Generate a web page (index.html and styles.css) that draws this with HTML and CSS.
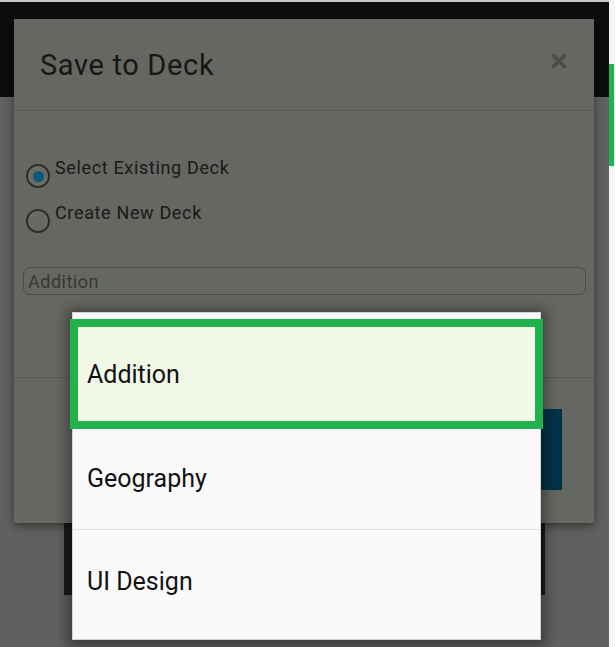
FILE: index.html
```html
<!DOCTYPE html>
<html lang="en">
<head>
<meta charset="utf-8">
<title>Save to Deck</title>
<link rel="stylesheet" href="styles.css">
</head>
<body>
<div class="page">
  <div class="screen">
    <div class="topline"></div>
    <div class="appbar"></div>
    <div class="content">
      <div class="card"></div>
    </div>

    <div class="modal">
      <div class="modal-header">
        <h1 class="modal-title">Save to Deck</h1>
        <button class="close" aria-label="Close">
          <svg width="16" height="16" viewBox="0 0 16 16"><path d="M2.5 2.5 L13.5 13.5 M13.5 2.5 L2.5 13.5" stroke="#4b4e4a" stroke-width="3.6" stroke-linecap="round" fill="none"/></svg>
        </button>
      </div>
      <div class="modal-body">
        <label class="radio-row">
          <span class="radio checked"><span class="dot"></span></span>
          <span class="radio-label">Select Existing Deck</span>
        </label>
        <label class="radio-row">
          <span class="radio"></span>
          <span class="radio-label">Create New Deck</span>
        </label>
        <div class="select-field">Addition</div>
      </div>
      <div class="modal-footer">
        <div class="btn-primary"></div>
      </div>
    </div>

    <ul class="dropdown">
      <li class="option selected">Addition</li>
      <li class="option">Geography</li>
      <li class="option">UI Design</li>
    </ul>
  </div>
  <div class="edge"><div class="edge-bar"></div></div>
</div>
</body>
</html>
```

FILE: styles.css
```css
* { box-sizing: border-box; }

html, body {
  margin: 0;
  padding: 0;
  width: 615px;
  height: 647px;
  overflow: hidden;
  background: #f4f4f4;
  font-family: Roboto, "Noto Sans", sans-serif;
}

.page {
  display: flex;
  width: 615px;
  height: 647px;
}

.screen {
  position: relative;
  width: 609px;
  height: 647px;
  display: flex;
  flex-direction: column;
  background: #5f615e;
}

.topline {
  height: 2px;
  background: #c3c9ce;
}

.appbar {
  height: 95px;
  background: #0c0d0c;
}

.content {
  flex: 1;
  padding-top: 53px;
}

.card {
  margin-left: 64px;
  width: 481px;
  height: 445px;
  background: #1b1d1b;
}

.edge {
  width: 6px;
  height: 647px;
  background: #f6f6f6;
  padding-top: 64px;
}

.edge-bar {
  width: 5px;
  height: 102px;
  background: #22b24c;
}

/* Modal dialog (overlay) */
.modal {
  position: absolute;
  left: 14px;
  top: 19px;
  width: 580px;
  height: 504px;
  background: #656763;
  box-shadow: 0 3px 8px rgba(0, 0, 0, 0.45);
  display: flex;
  flex-direction: column;
}

.modal-header {
  height: 92px;
  border-bottom: 1px solid #555854;
  display: flex;
  align-items: center;
  justify-content: space-between;
  padding: 0 27px 0 26px;
}

.modal-title {
  margin: 0;
  font-weight: 400;
  font-size: 29px;
  letter-spacing: 0.65px;
  color: #161716;
}

.close {
  border: 0;
  background: transparent;
  padding: 0;
  width: 16px;
  height: 16px;
  margin-bottom: 7px;
  display: flex;
}

.modal-body {
  height: 266px;
  padding: 46px 8px 0 12px;
  display: flex;
  flex-direction: column;
}

.radio-row {
  display: flex;
  align-items: flex-start;
  gap: 5px;
  height: 21px;
  margin-bottom: 24px;
}

.radio {
  width: 24px;
  height: 24px;
  margin-top: 7px;
  border-radius: 50%;
  border: 2px solid #2c2e2c;
  box-shadow: inset 0 0 0 1px #737672;
  background: #686a66;
  display: flex;
  align-items: center;
  justify-content: center;
  flex-shrink: 0;
}

.dot {
  width: 11px;
  height: 11px;
  border-radius: 50%;
  background: #0d5878;
}

.radio-label {
  font-size: 18px;
  line-height: 21px;
  letter-spacing: 0.65px;
  color: #191a19;
}

.select-field {
  margin-top: 20px;
  margin-left: -3px;
  height: 28px;
  border: 1px solid #4a4c49;
  border-radius: 7px;
  padding: 3px 0 0 4px;
  font-size: 18px;
  line-height: 21px;
  letter-spacing: 0.5px;
  color: #363835;
}

.modal-footer {
  flex: 1;
  border-top: 1px solid #555854;
  display: flex;
  justify-content: flex-end;
  align-items: flex-start;
  padding: 31px 32px 0 0;
}

.btn-primary {
  width: 170px;
  height: 81px;
  background: #02334a;
}

/* Dropdown popup (overlay) */
.dropdown {
  position: absolute;
  left: 72px;
  top: 312px;
  width: 469px;
  height: 328px;
  margin: 0;
  padding: 9px 0 7px;
  list-style: none;
  background: #fafafa;
  border: 1px solid #d2d2d2;
  box-shadow: 0 2px 12px 5px rgba(0, 0, 0, 0.38);
}

.option {
  height: 103px;
  display: flex;
  align-items: center;
  padding-left: 14px;
  font-size: 25px;
  color: #121212;
  border-top: 1px solid #e3e3e3;
}

.option:first-child {
  height: 104px;
  border-top: 0;
}

.option.selected {
  background: #f1f8e8;
  outline: 8px solid #22b24c;
  outline-offset: -5px;
}
```
